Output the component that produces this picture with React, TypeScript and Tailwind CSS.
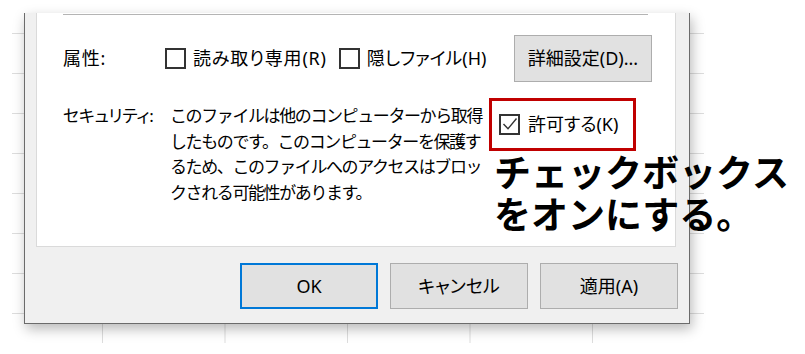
import React from "react";

const CheckBox = ({ checked }: { checked?: boolean }) => {
  return (
    <span className="relative block w-[21px] h-[21px] border-2 border-[#333333] bg-white shrink-0">
      {checked && (
        <svg className="absolute -inset-[2px]" width="21" height="21" viewBox="0 0 21 21">
          <path d="M4.5 10 L9 14.8 L17.5 4.5" fill="none" stroke="#333333" strokeWidth="1.4" />
        </svg>
      )}
    </span>
  );
};

const DialogButton = ({ label, primary }: { label: string; primary?: boolean }) => {
  return (
    <button
      className={
        primary
          ? "w-[138px] h-[46px] bg-[#e1e1e1] border-2 border-[#0078d7] text-[18px] text-black"
          : "w-[138px] h-[46px] bg-[#e1e1e1] border border-[#adadad] text-[18px] text-black"
      }
    >
      {label}
    </button>
  );
};

export default function App() {
  return (
    <div className="w-[805px] h-[354px] bg-white relative overflow-hidden font-['Noto_Sans','Noto_Sans_CJK_JP',sans-serif] [font-feature-settings:'palt'] text-black">
      {/* spreadsheet behind the dialog */}
      <div className="ml-[12px] mt-[13px] w-[692px] h-[330px] bg-white bg-[linear-gradient(to_right,#dddddd_1px,transparent_1px),linear-gradient(to_bottom,#dddddd_1px,transparent_1px)] [background-size:122.5px_40px] [background-position:90px_20px]">
        <div className="ml-[12px] w-[666px] h-[311px] bg-[#f0f0f0] border-x border-b border-[#6b6b6b] shadow-[2px_5px_12px_rgba(0,0,0,0.28)] flex flex-col">
          <div className="ml-[11px] mr-[13px] h-[234px] bg-white border-x border-b border-[#dadada] pl-[26px] pr-[23px] flex flex-col">
            <div className="mt-[1px] h-px bg-[#b4b4b4] mr-[4px]" />

            <div className="mt-[20px] h-[47px] flex items-center text-[18px] tracking-[0.8px]">
              <span className="w-[102px]">属性:</span>
              <CheckBox />
              <span className="ml-[7px]">読み取り専用(R)</span>
              <span className="ml-[12px]">
                <CheckBox />
              </span>
              <span className="ml-[7px] tracking-[0px]">隠しファイル(H)</span>
              <button className="ml-auto w-[138px] h-[47px] bg-[#e1e1e1] border border-[#adadad] text-[18px] tracking-normal">
                詳細設定(D)...
              </button>
            </div>

            <div className="mt-[16px] flex items-start">
              <span className="w-[107px] pt-[5px] text-[17px] tracking-[-0.3px] leading-[25px] whitespace-nowrap">
                セキュリティ:
              </span>
              <p className="w-[313px] pt-[5px] text-[17px] tracking-[-1.4px] leading-[25.5px] whitespace-nowrap [font-feature-settings:normal]">
                このファイルは他のコンピューターから取得
                <br />
                したものです。このコンピューターを保護す
                <br />
                るため、このファイルへのアクセスはブロッ
                <br />
                クされる可能性があります。
              </p>
              <div className="ml-[6px] w-[147px] h-[53px] border-[3px] border-[#c00000] pl-[7px] flex items-center text-[18px]">
                <CheckBox checked />
                <span className="ml-[8px] whitespace-nowrap">許可する(K)</span>
              </div>
            </div>
          </div>

          <div className="mt-[16px] pr-[11px] flex justify-end gap-[12px]">
            <DialogButton label="OK" primary />
            <DialogButton label="キャンセル" />
            <DialogButton label="適用(A)" />
          </div>
        </div>
      </div>

      {/* callout over the dialog */}
      <p className="absolute left-[494px] top-[150px] text-[37px] leading-[42px] font-bold text-black whitespace-nowrap font-['Noto_Sans_CJK_JP',sans-serif] [font-feature-settings:normal]">
        チェックボックス
        <br />
        をオンにする。
      </p>
    </div>
  );
}
